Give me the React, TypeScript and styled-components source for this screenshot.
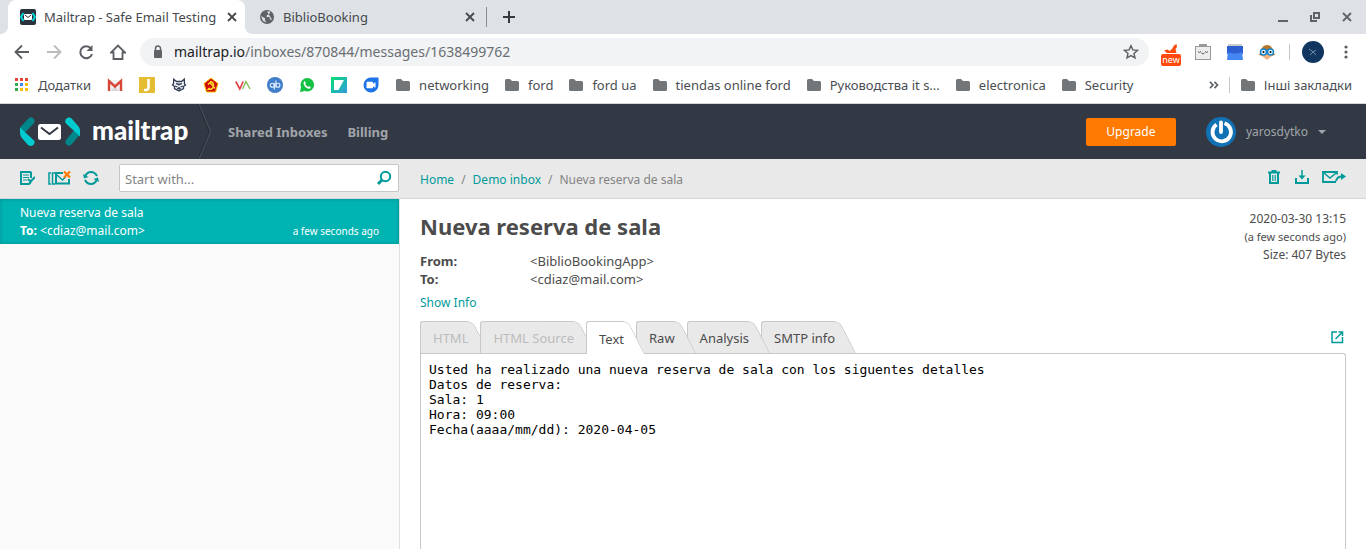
import React from "react";
import styled, { createGlobalStyle, css } from "styled-components";

const teal = "#009a9a";

const Global = createGlobalStyle`
  * { box-sizing: border-box; }
  html, body, #root { height: 100%; }
  body { margin: 0; background: #fff; color: #4c4c4c; font: 13px/18px "Noto Sans", sans-serif; }
  button, input { font: inherit; }
  button { margin: 0; padding: 0; border: 0; background: none; color: inherit; cursor: pointer; }
  a { color: inherit; text-decoration: none; }
  svg { display: block; flex: none; }
  h1, p, dl, dd, pre { margin: 0; }
`;

const Page = styled.div`
  display: flex;
  flex-direction: column;
  min-height: 100%;
`;

/* Browser chrome */
const TabStrip = styled.div`
  display: flex;
  align-items: center;
  height: 34px;
  padding-left: 8px;
  background: #dee1e6;
  color: #45494d;
`;
const BrowserTab = styled.div<{ $active?: boolean }>`
  position: relative;
  display: flex;
  align-items: center;
  gap: 8px;
  width: 239px;
  height: 34px;
  padding: 0 8px 0 12px;
  border-radius: 8px 8px 0 0;
  background: ${(p) => (p.$active ? "#fff" : "transparent")};
  ${(p) =>
    p.$active &&
    css`
      width: 237px;
      margin-right: 2px;
      padding-right: 5px;
      &::before,
      &::after {
        content: "";
        position: absolute;
        bottom: 0;
        width: 8px;
        height: 8px;
      }
      &::before {
        right: 100%;
        background: radial-gradient(circle at 0 0, transparent 8px, #fff 8px);
      }
      &::after {
        left: 100%;
        background: radial-gradient(circle at 100% 0, transparent 8px, #fff 8px);
      }
    `}
`;
const TabTitle = styled.span`
  flex: 1;
  white-space: nowrap;
  overflow: hidden;
`;
const IconButton = styled.button<{ $size?: number }>`
  display: grid;
  place-items: center;
  width: ${(p) => p.$size ?? 16}px;
  height: ${(p) => p.$size ?? 16}px;
`;
const Divider = styled.span`
  width: 1px;
  height: 16px;
  background: #c3c6ca;
`;
const StripDivider = styled(Divider)`
  height: 20px;
  margin-right: 14px;
  background: #8b8f94;
`;
const WindowButtons = styled.div`
  display: flex;
  gap: 16px;
  margin-left: auto;
  padding-right: 11px;
  color: #5f6368;
`;
const Toolbar = styled.div`
  display: flex;
  align-items: center;
  height: 36px;
  padding: 0 10px 0 14px;
  background: #fff;
  color: #5a5e63;
`;
const NavButtons = styled.div`
  display: flex;
  gap: 16px;
  margin-right: 14px;
`;
const Omnibox = styled.label`
  display: flex;
  flex: 1;
  align-items: center;
  gap: 8px;
  height: 28px;
  padding: 0 10px;
  border-radius: 14px;
  background: #f1f3f4;
`;
const Address = styled.span`
  flex: 1;
  font-size: 14px;
  color: #6a6e73;
  b { font-weight: 400; color: #202124; }
`;
const Extensions = styled.div`
  display: flex;
  align-items: center;
  gap: 12px;
  margin-left: 12px;
`;
const NewBadge = styled.span`
  position: absolute;
  left: 0;
  top: 12px;
  width: 20px;
  height: 12px;
  border-radius: 2px;
  background: #ff4a0c;
  color: #fff;
  font-size: 9px;
  line-height: 12px;
  text-align: center;
`;
const BadgedButton = styled(IconButton)`
  position: relative;
`;
const Bookmarks = styled.nav`
  display: flex;
  align-items: center;
  gap: 16px;
  height: 34px;
  padding: 0 14px 4px;
  border-bottom: 1px solid #d5d7da;
  background: #fff;
  color: #4a4e52;
`;
const Bookmark = styled.a`
  display: flex;
  align-items: center;
  gap: 8px;
  white-space: nowrap;
`;
const Folders = styled.div`
  display: flex;
  gap: 15px;
`;
const BookmarkEnd = styled.div`
  display: flex;
  align-items: center;
  gap: 10px;
  margin-left: auto;
`;

/* Mailtrap */
const Header = styled.header`
  display: flex;
  align-items: center;
  height: 55px;
  padding: 0 40px 0 20px;
  background: #323944;
  color: #a1a5aa;
`;
const Brand = styled.a`
  display: flex;
  align-items: center;
  gap: 12px;
  color: #fff;
`;
const Wordmark = styled.span`
  width: 97px;
  padding-bottom: 4px;
  font: 900 26px/32px Lato, sans-serif;
`;
const MainNav = styled.nav`
  display: flex;
  gap: 20px;
  margin-left: 15px;
  font-weight: 700;
`;
const Upgrade = styled.button`
  width: 90px;
  height: 28px;
  margin-left: auto;
  border-radius: 2px;
  background: #ff7a00;
  color: #fff;
  font-size: 12px;
`;
const Account = styled.button`
  display: flex;
  align-items: center;
  gap: 10px;
  margin-left: 30px;
  font-size: 12px;
`;
const Body = styled.div`
  display: flex;
  flex: 1;
`;
const Sidebar = styled.aside`
  width: 400px;
  flex: none;
  border-right: 1px solid #e0e0e0;
  background: #fafafa;
`;
const Bar = styled.div`
  display: flex;
  align-items: center;
  height: 40px;
  border-bottom: 1px solid #d6d6d6;
  background: #e9e9e9;
  color: ${teal};
`;
const SideBar = styled(Bar)`
  gap: 12px;
  margin-right: -1px;
  padding: 0 1px 2px 19px;
`;
const Search = styled.label`
  display: flex;
  flex: 1;
  align-items: center;
  height: 28px;
  margin-left: 8px;
  padding: 0 6px 0 5px;
  border: 1px solid #c6c6c6;
  border-radius: 2px;
  background: #fff;
`;
const SearchInput = styled.input`
  flex: 1;
  min-width: 0;
  padding: 2px 0 0;
  border: 0;
  outline: 0;
  background: none;
  &::placeholder { color: #858585; opacity: 1; }
`;
const Message = styled.a`
  display: block;
  height: 45px;
  padding: 5px 20px 4px;
  background: #00b3b3;
  box-shadow: inset 0 0 4px rgba(0, 90, 90, 0.35);
  color: #fff;
  font-size: 12px;
`;
const MessageMeta = styled.div`
  display: flex;
  justify-content: space-between;
  small { font-size: 10px; }
`;
const Main = styled.main`
  display: flex;
  flex: 1;
  flex-direction: column;
  min-width: 0;
`;
const MainBar = styled(Bar)`
  justify-content: space-between;
  padding: 0 20px;
`;
const Crumbs = styled.nav`
  display: flex;
  gap: 7px;
  padding-top: 2px;
  color: #838383;
  font-size: 12px;
  a { color: ${teal}; }
`;
const Actions = styled.div`
  display: flex;
  align-items: center;
  gap: 12px;
  padding-bottom: 4px;
`;
const Content = styled.section`
  display: flex;
  flex: 1;
  flex-direction: column;
  padding: 11px 20px 0;
`;
const Heading = styled.div`
  display: flex;
  justify-content: space-between;
`;
const Title = styled.h1`
  margin-bottom: 10px;
  font: 700 22px/32px "Noto Sans", sans-serif;
`;
const Fields = styled.dl`
  display: grid;
  grid-template-columns: 110px auto;
  margin-bottom: 5px;
  dt { font-weight: 700; }
`;
const ShowInfo = styled.button`
  color: ${teal};
  font-size: 12px;
  line-height: 18px;
`;
const Stats = styled.div`
  text-align: right;
  font-size: 12px;
  small { font-size: 11px; }
`;
const TabRow = styled.div`
  display: flex;
  align-items: center;
  justify-content: space-between;
  margin-top: 9px;
  padding-right: 1px;
  color: ${teal};
`;
const Tabs = styled.div`
  display: flex;
  align-items: flex-start;
`;
const Tab = styled.button<{ $active?: boolean; $z: number }>`
  position: relative;
  z-index: ${(p) => p.$z};
  height: ${(p) => (p.$active ? 33 : 32)}px;
  margin-bottom: ${(p) => (p.$active ? -1 : 0)}px;
  padding: 2px 12px 0 13px;
  color: #4c4c4c;
  &:disabled { color: #bcbcbc; }
  &::before,
  &::after {
    content: "";
    position: absolute;
    z-index: -1;
    top: 0;
    bottom: 0;
    border-top: 1px solid #c8c8c8;
    background: ${(p) => (p.$active ? "#fff" : "#e9e9e9")};
  }
  &::before {
    left: 0;
    right: 24px;
    border-left: 1px solid #c8c8c8;
    border-top-left-radius: 3px;
  }
  &::after {
    right: -9px;
    width: 36px;
    border-right: 1px solid #c8c8c8;
    border-top-right-radius: 6px;
    transform: skewX(27deg);
    transform-origin: bottom right;
  }
`;
const Panel = styled.pre`
  flex: 1;
  padding: 8px;
  border: 1px solid #c8c8c8;
  border-bottom: 0;
  border-radius: 0 3px 0 0;
  color: #000;
  font: 13px/15px "DejaVu Sans Mono", monospace;
`;

const Close = () => (
  <svg width="10" height="10" viewBox="0 0 10 10" stroke="currentColor" strokeWidth="1.800"><path d="M1 1l8 8M9 1l-8 8" /></svg>
);
const Folder = () => (
  <svg width="16" height="16" viewBox="0 0 16 16" fill="#727679"><path d="M1 3.500Q1 2 2.500 2H6l2 2h5.500Q15 4 15 5.500v7Q15 14 13.500 14h-11Q1 14 1 12.500z" /></svg>
);
const Favicon = () => (
  <svg width="16" height="16" viewBox="0 0 16 16">
    <rect width="16" height="16" rx="2" fill="#2b323d" />
    <path d="M3.500 4L1 8l2.500 4M12.500 4L15 8l-2.500 4" stroke="#00d5d5" strokeWidth="2" fill="none" />
    <rect x="4" y="5" width="8" height="6" rx="1" fill="#fff" /><path d="M5 6l3 2.500L11 6" stroke="#2b323d" fill="none" />
  </svg>
);
const Globe = () => (
  <svg width="16" height="16" viewBox="0 0 16 16"><circle cx="8" cy="8" r="7" fill="#5f6368" /><path d="M8 2.500h3.500L10 5.500 8 6 7.500 8h3l.5 2.500 2 .2M2 7l4 2.200v2l1.500 2.300L4 12z" fill="#dee1e6" /></svg>
);
const Star = () => (
  <svg width="16" height="16" viewBox="0 0 16 16" fill="none" stroke="currentColor" strokeWidth="1.400"><path d="M8 1.700l1.900 4.200 4.500.5-3.400 3 1 4.500L8 11.600l-4 2.300 1-4.500-3.400-3 4.500-.5z" /></svg>
);

const siteIcons: [string, React.ReactNode][] = [
  ["Gmail", <><rect x="1" y="3" width="14" height="11" fill="#f1f1f1" /><path d="M4 14L8 9l4 5" fill="#d8d8d8" /><path d="M2 14V4l6 5.500L14 4v10" fill="none" stroke="#d7473a" strokeWidth="2.400" /></>],
  ["J", <><rect width="16" height="16" fill="#e5bd33" /><path d="M9.500 2v8.500q0 3-4.500 2.500" fill="none" stroke="#fff" strokeWidth="2.500" /></>],
  ["Fox", <><path d="M2.700 2.200l2.800 2.300h5l2.800-2.300.2 4.800 1 1-2 1.500v2L8 14l-4.500-2.500v-2l-2-1.500 1-1z" fill="#f4f6f9" stroke="#303a54" strokeWidth="1.300" /><path d="M5 6.500L8 8l3-1.500M4 9l2.500 1M12 9l-2.500 1M6.500 12L8 10.500 9.500 12z" fill="#303a54" stroke="#303a54" strokeWidth="1.100" /></>],
  ["USSR", <><path d="M8 1l7 5.500L12.500 15h-9L1 6.500z" fill="#d00a08" stroke="#f6c400" /><path d="M5 12q5 1 5.500-3T7 4.500M5 7.500l2-2 5 6M4.500 13l2-2" stroke="#ffd92b" strokeWidth="1.500" fill="none" /></>],
  ["VA", <><path d="M.8 4.500l4 7.500 3.400-7.500" fill="none" stroke="#e43a45" strokeWidth="1.600" /><path d="M7.500 12l3.500-7.500 4 7.500" fill="none" stroke="#81bd54" strokeWidth="1.400" /></>],
  ["qb", <><circle cx="8" cy="8" r="8" fill="#3f7dc9" /><circle cx="5.300" cy="8.200" r="2" fill="none" stroke="#e4f0ff" strokeWidth="1.100" /><circle cx="10.900" cy="8.200" r="2" fill="none" stroke="#e4f0ff" strokeWidth="1.100" /><path d="M7.300 6v6.500M8.900 3.500v7" stroke="#e4f0ff" strokeWidth="1.100" /></>],
  ["WhatsApp", <><circle cx="8.300" cy="7.700" r="6.800" fill="#13c143" /><path d="M1 15l1-5 4 4z" fill="#13c143" /><path d="M5 4.500q.8-.8 1.500.6t-.3 2q1 2 3 2.700.8-1.300 2 0t-.5 2Q7 12 5 8 4 5.500 5 4.500z" fill="#fff" /></>],
  ["Z", <><defs><linearGradient id="zg" y2="1"><stop stopColor="#05df72" /><stop offset="1" stopColor="#329ae0" /></linearGradient></defs><rect width="16" height="16" fill="url(#zg)" /><path d="M3 3h10L7.500 13H3z" fill="#fff" /></>],
  ["Duo", <><path d="M8 .5h7.500V8A7.500 7.500 0 118 .5z" fill="#1d73e8" /><path d="M3.500 5.500q0-.7.7-.7h5.100q.7 0 .7.700v1.300l2.500-1.500v5.400L10 9.200v1.300q0 .7-.7.700H4.200q-.7 0-.7-.7z" fill="#fff" /></>],
];

const folders = ["networking", "ford", "ford ua", "tiendas online ford", "Руководства it s...", "electronica", "Security"];

const BrowserChrome = () => (
  <>
    <TabStrip>
      <BrowserTab $active>
        <Favicon />
        <TabTitle>Mailtrap - Safe Email Testing</TabTitle>
        <IconButton aria-label="Close tab"><Close /></IconButton>
      </BrowserTab>
      <BrowserTab>
        <Globe />
        <TabTitle>BiblioBooking</TabTitle>
        <IconButton aria-label="Close tab"><Close /></IconButton>
      </BrowserTab>
      <StripDivider />
      <IconButton aria-label="New tab">
        <svg width="12" height="12" viewBox="0 0 12 12" stroke="#35393d" strokeWidth="2"><path d="M6 0v12M0 6h12" /></svg>
      </IconButton>
      <WindowButtons>
        <IconButton aria-label="Minimize"><svg width="10" height="10" viewBox="0 0 10 10"><path d="M0 8h10v2H0z" fill="currentColor" /></svg></IconButton>
        <IconButton aria-label="Restore"><svg width="10" height="10" viewBox="0 0 10 10" fill="none" stroke="currentColor" strokeWidth="2"><path d="M4 1h5v5H4zM1 3v6h6" /></svg></IconButton>
        <IconButton aria-label="Close window"><Close /></IconButton>
      </WindowButtons>
    </TabStrip>
    <Toolbar>
      <NavButtons>
        <IconButton aria-label="Back"><svg width="16" height="16" viewBox="0 0 16 16" fill="none" stroke="currentColor" strokeWidth="1.800"><path d="M15 8H2M8 1.500L1.500 8 8 14.500" /></svg></IconButton>
        <IconButton aria-label="Forward"><svg width="16" height="16" viewBox="0 0 16 16" fill="none" stroke="#bbbdbf" strokeWidth="1.800"><path d="M1 8h13M8 1.500L14.500 8 8 14.500" /></svg></IconButton>
        <IconButton aria-label="Reload"><svg width="16" height="16" viewBox="0 0 16 16" fill="none" stroke="currentColor" strokeWidth="2"><path d="M13 4.500A6 6 0 1014 10" /><path d="M14.500 1v6h-6z" fill="currentColor" stroke="none" /></svg></IconButton>
        <IconButton aria-label="Home"><svg width="16" height="16" viewBox="0 0 16 16" fill="none" stroke="currentColor" strokeWidth="1.800"><path d="M1 8.500h2.500V15h9V8.500H15L8 1.500z" /></svg></IconButton>
      </NavButtons>
      <Omnibox>
        <svg width="16" height="16" viewBox="0 0 16 16"><rect x="4" y="6" width="8" height="8" rx="1" fill="#5f6368" /><path d="M5.500 7V4.500a2.500 2.500 0 015 0V7" fill="none" stroke="#5f6368" strokeWidth="1.500" /></svg>
        <Address><b>mailtrap.io</b>/inboxes/870844/messages/1638499762</Address>
        <Star />
      </Omnibox>
      <Extensions>
        <BadgedButton $size={20} aria-label="What's new">
          <svg width="20" height="20" viewBox="0 0 20 20"><path d="M3 8.500l3.500-1 2 1.500 2.500-2 2-3.500L15.500 2l.5 3-1.500 2 1 4H6z" fill="#ff4a0c" /></svg>
          <NewBadge>new</NewBadge>
        </BadgedButton>
        <IconButton $size={20} aria-label="Robot"><svg width="16" height="16" viewBox="0 0 16 16"><path d="M4 0h8v3H4z" fill="#999" /><rect x=".5" y="2.500" width="15" height="13" fill="#ededed" stroke="#999" /><path d="M3 7.500q1.500 2 3 0M6.500 9q1.500 2 3 0M10 7.500q1.500 2 3 0" fill="none" stroke="#555" /></svg></IconButton>
        <IconButton $size={20} aria-label="Calendar"><svg width="16" height="16" viewBox="0 0 16 16"><path d="M1 0h14v3H1z" fill="#ccc" /><path d="M0 2h16v8H0z" fill="#2e5fd0" /><path d="M1 8q7 3 14 0l1 8H0z" fill="#4586f5" /></svg></IconButton>
        <IconButton $size={20} aria-label="Owl"><svg width="16" height="16" viewBox="0 0 16 16"><path d="M2 7Q3 1 8 1t6 6l2 4-4 1H4l-4-1z" fill="#b5762a" /><path d="M3 6h10v6l-5 4-5-4z" fill="#f1b480" /><g fill="#e8f7ff" stroke="#1683c9" strokeWidth="1.500"><circle cx="4.500" cy="8" r="3" /><circle cx="11.500" cy="8" r="3" /></g><circle cx="4.500" cy="8" r="1" /><circle cx="11.500" cy="8" r="1" /></svg></IconButton>
        <Divider />
        <IconButton $size={22} aria-label="Profile"><svg width="22" height="22" viewBox="0 0 22 22"><circle cx="11" cy="11" r="11" fill="#10365f" /><path d="M7 8l4 3 3-2M11 11l-3 3M11 11l3 3" stroke="#6f8ba8" fill="none" /></svg></IconButton>
        <IconButton $size={20} aria-label="Menu"><svg width="4" height="14" viewBox="0 0 4 14" fill="currentColor"><circle cx="2" cy="2" r="1.600" /><circle cx="2" cy="7" r="1.600" /><circle cx="2" cy="12" r="1.600" /></svg></IconButton>
      </Extensions>
    </Toolbar>
    <Bookmarks aria-label="Bookmarks">
      <Bookmark href="#">
        <svg width="16" height="16" viewBox="0 0 16 16">
          {["#ea4335", "#ea4335", "#ea4335", "#34a853", "#4285f4", "#fbbc05", "#34a853", "#fbbc05", "#fbbc05"].map((c, i) => (
            <rect key={i} x={1 + (i % 3) * 5} y={1 + Math.floor(i / 3) * 5} width="3" height="3" fill={c} />
          ))}
        </svg>
        Додатки
      </Bookmark>
      {siteIcons.map(([name, art]) => (
        <Bookmark key={name} href="#" aria-label={name}><svg width="16" height="16" viewBox="0 0 16 16">{art}</svg></Bookmark>
      ))}
      <Folders>
        {folders.map((f) => (
          <Bookmark key={f} href="#"><Folder />{f}</Bookmark>
        ))}
      </Folders>
      <BookmarkEnd>
        <IconButton $size={10} aria-label="More bookmarks"><svg width="10" height="8" viewBox="0 0 10 8" fill="none" stroke="#5f6368" strokeWidth="1.700"><path d="M1 .8L4 4 1 7.200M5.500.8l3 3.200-3 3.200" /></svg></IconButton>
        <Divider />
        <Bookmark href="#"><Folder />Інші закладки</Bookmark>
      </BookmarkEnd>
    </Bookmarks>
  </>
);

const AppHeader = () => (
  <Header>
    <Brand href="#">
      <svg width="60" height="30" viewBox="0 0 60 30">
        <g strokeWidth="7" strokeLinecap="round">
          <path d="M3.500 12L11 4" stroke="#00868b" /><path d="M49 25L56.500 16" stroke="#00868b" />
        </g>
        <path d="M0 10.500L14 23.500Q15.500 26 13 28.300 10.500 30 8 28L1.500 20.500Q0 18.500 0 16z" fill="#00cbd0" />
        <path d="M60 19.500L46 6.500Q44 4 46.500 1.500 49.500-.5 52 2L58.500 9.500Q60 11.500 60 14z" fill="#00cbd0" />
        <rect x="18" y="7" width="23" height="16" rx="2.500" fill="#fff" />
        <path d="M21 10.500l8.500 6.500 8.500-6.500" fill="none" stroke="#323944" strokeWidth="2" />
      </svg>
      <Wordmark>mailtrap</Wordmark>
    </Brand>
    <svg width="24" height="55" viewBox="0 0 24 55" fill="none"><path d="M9 0l11.500 27.500L9 55" stroke="#282e37" strokeWidth="1.500" /><path d="M10 0l11.500 27.500L10 55" stroke="#4b5461" /></svg>
    <MainNav><a href="#">Shared Inboxes</a><a href="#">Billing</a></MainNav>
    <Upgrade>Upgrade</Upgrade>
    <Account>
      <svg width="30" height="30" viewBox="0 0 30 30" fill="none"><circle cx="15" cy="15" r="15" fill="#1071b4" /><path d="M10.500 7.500a9.200 9.200 0 108-1.200" stroke="#fff" strokeWidth="3.800" /><path d="M15 5.500V15" stroke="#fff" strokeWidth="3.800" strokeLinecap="round" /></svg>
      yarosdytko
      <svg width="8" height="4" viewBox="0 0 8 4" fill="currentColor"><path d="M0 0h8L4 4z" /></svg>
    </Account>
  </Header>
);

const tabs = [
  { label: "HTML", disabled: true },
  { label: "HTML Source", disabled: true },
  { label: "Text", active: true },
  { label: "Raw" },
  { label: "Analysis" },
  { label: "SMTP info" },
];
const activeTab = tabs.findIndex((t) => t.active);

const mailText = `Usted ha realizado una nueva reserva de sala con los siguentes detalles
Datos de reserva:
Sala: 1
Hora: 09:00
Fecha(aaaa/mm/dd): 2020-04-05`;

export default function App() {
  return (
    <Page>
      <Global />
      <BrowserChrome />
      <AppHeader />
      <Body>
        <Sidebar>
          <SideBar>
            <IconButton aria-label="Mark all as read"><svg width="16" height="16" viewBox="0 0 16 16" fill="none" stroke="currentColor"><path d="M12 8V2.500L11 2H2v12h8l2-2" strokeWidth="2" /><path d="M4 5h6M4 7.500h6M4 10h4" strokeWidth="1.200" /><path d="M9 9l2.500 2.500L16 7" strokeWidth="2" /></svg></IconButton>
            <IconButton aria-label="Clean inbox" $size={24}><svg width="24" height="16" viewBox="0 0 24 16" fill="none" stroke="currentColor"><path d="M4 3H2v11h2M8 3H5.500v11H8" strokeWidth="1.500" /><path d="M16 3H9v10.500h13V9" strokeWidth="2" /><path d="M10 5l5.500 5 3-3" strokeWidth="1.500" /><path d="M17 1.500l6 6M23 1.500l-6 6" stroke="#ff7a00" strokeWidth="2.200" /></svg></IconButton>
            <IconButton aria-label="Refresh"><svg width="16" height="16" viewBox="0 0 16 16" fill="none" stroke="currentColor" strokeWidth="2"><path d="M2 6.500Q4 2 8 2q4 0 6 4M14 9.500Q12 14 8 14q-4 0-6-4" /><path d="M0 4l1 4.500L5.500 7zM16 12l-1-4.500L10.500 9z" fill="currentColor" stroke="none" /></svg></IconButton>
            <Search>
              <SearchInput placeholder="Start with..." aria-label="Search messages" />
              <svg width="16" height="16" viewBox="0 0 16 16" fill="none" stroke="currentColor" strokeWidth="2"><circle cx="9.500" cy="6.500" r="4.700" /><path d="M6 10l-4 4" strokeWidth="3" /></svg>
            </Search>
          </SideBar>
          <Message href="#">
            <div>Nueva reserva de sala</div>
            <MessageMeta><span><b>To:</b> &lt;cdiaz@mail.com&gt;</span><small>a few seconds ago</small></MessageMeta>
          </Message>
        </Sidebar>
        <Main>
          <MainBar>
            <Crumbs><a href="#">Home</a><span>/</span><a href="#">Demo inbox</a><span>/</span><span>Nueva reserva de sala</span></Crumbs>
            <Actions>
              <IconButton aria-label="Delete"><svg width="14" height="16" viewBox="0 0 14 16" fill="none" stroke="currentColor"><path d="M1 3.500h12M4.500 2h5" strokeWidth="2" /><path d="M3 4v10h8V4" strokeWidth="2" /><path d="M5.500 6v6M7 6v6M8.500 6v6" strokeWidth=".8" /></svg></IconButton>
              <IconButton aria-label="Download"><svg width="16" height="16" viewBox="0 0 16 16" fill="none" stroke="currentColor" strokeWidth="2"><path d="M2 9v5h12V9" /><path d="M8 1v8" strokeWidth="1.500" /><path d="M4.500 6.500h7L8 10.500z" fill="currentColor" stroke="none" /></svg></IconButton>
              <IconButton aria-label="Forward" $size={24}><svg width="24" height="16" viewBox="0 0 24 16" fill="none" stroke="currentColor"><path d="M14 13H1V3h14v2.500" strokeWidth="1.800" /><path d="M2 4l6 5 6-5" strokeWidth="1.500" /><path d="M14 12q1-4.500 6-4.500" strokeWidth="1.800" /><path d="M19 4l5 3.500-5 3.500z" fill="currentColor" stroke="none" /></svg></IconButton>
            </Actions>
          </MainBar>
          <Content>
            <Heading>
              <div>
                <Title>Nueva reserva de sala</Title>
                <Fields>
                  <dt>From:</dt><dd>&lt;BiblioBookingApp&gt;</dd>
                  <dt>To:</dt><dd>&lt;cdiaz@mail.com&gt;</dd>
                </Fields>
                <ShowInfo>Show Info</ShowInfo>
              </div>
              <Stats>
                <p>2020-03-30 13:15</p>
                <p><small>(a few seconds ago)</small></p>
                <p>Size: 407 Bytes</p>
              </Stats>
            </Heading>
            <TabRow>
              <Tabs role="tablist">
                {tabs.map((t, i) => (
                  <Tab key={t.label} role="tab" aria-selected={!!t.active} disabled={t.disabled} $active={t.active} $z={10 - Math.abs(i - activeTab)}>{t.label}</Tab>
                ))}
              </Tabs>
              <IconButton aria-label="Open in new window"><svg width="14" height="14" viewBox="0 0 14 14" fill="none" stroke="currentColor" strokeWidth="1.500"><path d="M7 2H2v10.500h10.500V7" /><path d="M5.500 9L12 2.500M8.500 2h4v4" /></svg></IconButton>
            </TabRow>
            <Panel>{mailText}</Panel>
          </Content>
        </Main>
      </Body>
    </Page>
  );
}
